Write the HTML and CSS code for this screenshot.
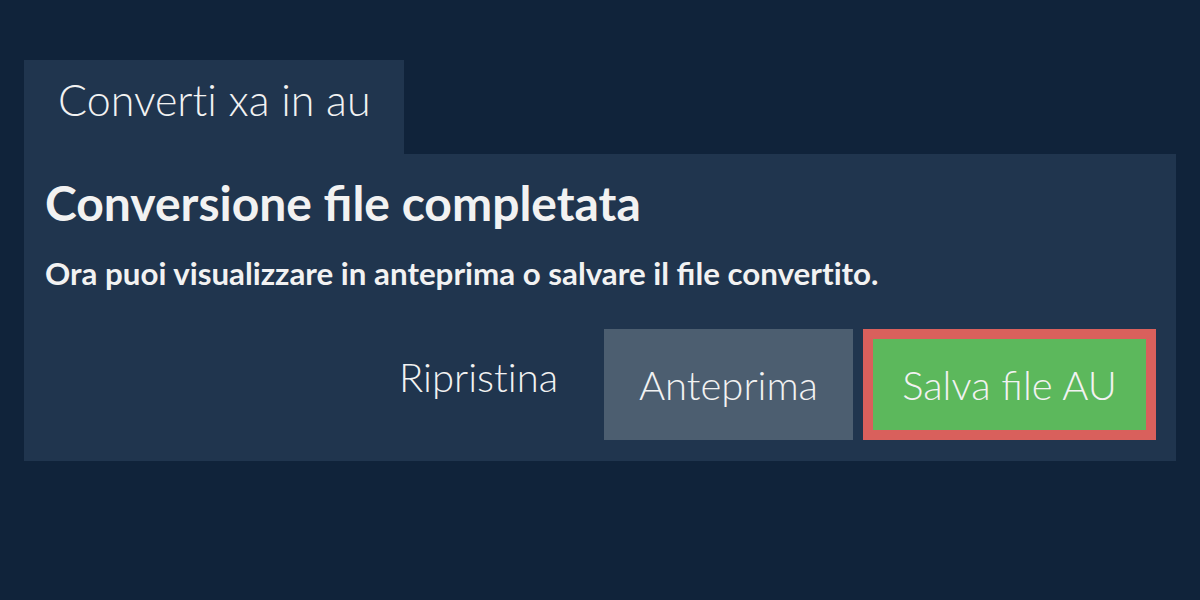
FILE: index.html
```html
<!DOCTYPE html>
<html lang="it">
<head>
<meta charset="utf-8">
<title>Converti xa in au</title>
<link rel="stylesheet" href="styles.css">
</head>
<body>
<div class="wrap">
  <div class="tab"><span class="nolig">Converti</span> xa in au</div>
  <div class="panel">
    <h1 class="title">Conversione file completata</h1>
    <p class="sub">Ora puoi visualizzare in anteprima o salvare il file <span class="nolig">convertito</span>.</p>
    <div class="actions">
      <span class="reset nolig">Ripristina</span>
      <span class="btn preview">Anteprima</span>
      <span class="btn save">Salva file AU</span>
    </div>
  </div>
</div>
</body>
</html>
```

FILE: styles.css
```css
html, body {
  margin: 0;
  padding: 0;
}
body {
  width: 1200px;
  height: 600px;
  background: #10233a;
  font-family: Lato, "Noto Sans", sans-serif;
  color: #f2f2f2;
  overflow: hidden;
}
.nolig {
  font-variant-ligatures: none;
}
.wrap {
  padding: 60px 24px 0 24px;
}
.tab {
  display: inline-block;
  vertical-align: top;
  width: 380px;
  height: 94px;
  box-sizing: border-box;
  background: #20354e;
  padding: 14px 0 0 34px;
  font-size: 43px;
  font-weight: 300;
  line-height: 52px;
}
.panel {
  background: #20354e;
  height: 307px;
  box-sizing: border-box;
  padding: 20px 20px 0 21px;
}
.title {
  margin: 0;
  font-size: 48px;
  font-weight: 700;
  line-height: 58px;
}
.sub {
  margin: 22px 0 0 0;
  font-size: 31.3px;
  font-weight: 700;
  line-height: 38px;
}
.actions {
  display: flex;
  justify-content: flex-end;
  align-items: center;
  margin-top: 37px;
}
.reset {
  font-size: 40px;
  font-weight: 300;
  line-height: 48px;
  margin-right: 46px;
  margin-bottom: 16px;
}
.btn {
  display: flex;
  align-items: center;
  justify-content: center;
  height: 111px;
  box-sizing: border-box;
  font-size: 40px;
  font-weight: 300;
}
.preview {
  width: 249px;
  background: #4c5e70;
  margin-right: 10px;
}
.save {
  width: 293px;
  background: #5cb85c;
  border: 10px solid #d9605c;
}
```
